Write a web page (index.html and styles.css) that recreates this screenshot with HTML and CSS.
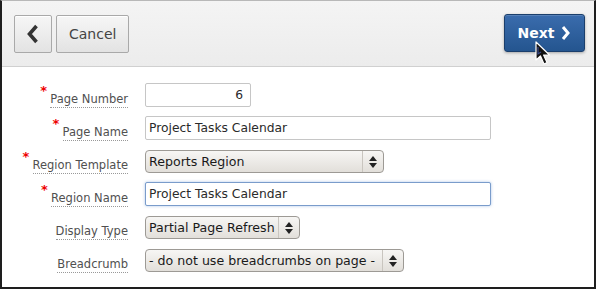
FILE: index.html
```html
<!DOCTYPE html>
<html lang="en">

<head>
    <meta charset="UTF-8">
    <title>Create Page - Attributes</title>
    <link rel="stylesheet" href="styles.css">
</head>

<body>
    <div class="frame">
        <header class="toolbar">
            <div class="toolbar-left">
                <button class="btn btn-icon" title="Previous">
                    <svg width="14" height="20" viewBox="0 0 14 20"><path d="M10.5 2 L3.5 10 L10.5 18" fill="none" stroke="#333" stroke-width="3.6" stroke-linejoin="miter"/></svg>
                </button>
                <button class="btn">Cancel</button>
            </div>
            <button class="btn btn-primary">Next
                <svg width="11" height="16" viewBox="0 0 11 16"><path d="M3 2 L8 8 L3 14" fill="none" stroke="#fff" stroke-width="3"/></svg>
            </button>
            <svg class="cursor" width="20" height="26" viewBox="0 0 20 26"><path d="M1 1 L1 19 L5.5 15 L9 23 L12 21.6 L8.6 14 L14.5 14 Z" fill="#111" stroke="#fff" stroke-width="1.2" stroke-linejoin="round"/><path d="M3 6 L3 13 L6 11" fill="none" stroke="#3a4a8a" stroke-width="1.2"/></svg>
        </header>

        <form class="form">
            <div class="row">
                <label class="label required"><span>Page Number</span></label>
                <input class="field field-num" type="text" value="6">
            </div>
            <div class="row">
                <label class="label required"><span>Page Name</span></label>
                <input class="field field-wide" type="text" value="Project Tasks Calendar">
            </div>
            <div class="row">
                <label class="label required"><span>Region Template</span></label>
                <div class="select select-template">
                    <span class="select-text">Reports Region</span>
                    <span class="select-arrow"></span>
                </div>
            </div>
            <div class="row">
                <label class="label required"><span>Region Name</span></label>
                <input class="field field-wide focused" type="text" value="Project Tasks Calendar">
            </div>
            <div class="row">
                <label class="label"><span>Display Type</span></label>
                <div class="select select-display">
                    <span class="select-text">Partial Page Refresh</span>
                    <span class="select-arrow"></span>
                </div>
            </div>
            <div class="row">
                <label class="label"><span>Breadcrumb</span></label>
                <div class="select select-crumb">
                    <span class="select-text">- do not use breadcrumbs on page -</span>
                    <span class="select-arrow"></span>
                </div>
            </div>
        </form>
    </div>
</body>

</html>
```

FILE: styles.css
```css
body {
    margin: 0;
    font-family: 'DejaVu Sans', sans-serif;
    background: #fff;
}

.frame {
    width: 596px;
    height: 289px;
    box-sizing: border-box;
    border-top: 1px solid #b8b8b8;
    border-left: 2px solid #1e1e1e;
    border-right: 2px solid #1e1e1e;
    border-bottom: 2px solid #1e1e1e;
    overflow: hidden;
}

.toolbar {
    position: relative;
    display: flex;
    justify-content: space-between;
    align-items: flex-start;
    height: 66px;
    box-sizing: border-box;
    padding: 14px 9px 0 12px;
    background: linear-gradient(#f4f4f4, #ececec);
    border-bottom: 1px solid #d0d0d0;
}

.toolbar-left {
    display: flex;
    gap: 4px;
}

.btn {
    display: flex;
    align-items: center;
    justify-content: center;
    height: 38px;
    padding: 0 12px;
    font-family: 'DejaVu Sans', sans-serif;
    font-size: 14px;
    color: #444;
    background: linear-gradient(#f6f6f6, #e3e3e3);
    border: 1px solid #a9a9a9;
    border-radius: 2px;
    box-shadow: inset 0 1px 0 #fff;
}

.btn-icon {
    width: 38px;
    padding: 0;
}

.btn-primary {
    gap: 6px;
    width: 81px;
    margin-top: -1px;
    font-size: 14px;
    font-weight: bold;
    color: #fff;
    background: linear-gradient(#3a6cad, #24558f);
    border: 1px solid #1b3f6c;
    border-radius: 3px;
    box-shadow: 0 1px 3px rgba(0, 0, 0, 0.3), inset 0 1px 0 rgba(255, 255, 255, 0.15);
}

.cursor {
    position: absolute;
    left: 533px;
    top: 40px;
}

.form {
    padding-top: 16px;
    display: flex;
    flex-direction: column;
    gap: 9px;
}

.row {
    display: flex;
    align-items: center;
    height: 24px;
}

.label {
    width: 126px;
    flex-shrink: 0;
    text-align: right;
    font-size: 11.5px;
    color: #505050;
    padding-top: 8px;
    margin-right: 17px;
}

.label span {
    position: relative;
    border-bottom: 1px dotted #999;
    padding-bottom: 1px;
}

.label.required span::before {
    content: "*";
    position: absolute;
    left: -10px;
    top: -9px;
    color: #e00;
    font-size: 13px;
    font-weight: bold;
}

.field {
    height: 24px;
    box-sizing: border-box;
    padding: 0 5px 0 3px;
    font-family: 'DejaVu Sans', sans-serif;
    font-size: 12.3px;
    color: #2a2a2a;
    border: 1px solid #c6c6c6;
    border-radius: 2px;
    background: #fff;
    outline: none;
}

.field-num {
    width: 106px;
    text-align: right;
    padding-right: 7px;
}

.field-wide {
    width: 346px;
}

.field.focused {
    border-color: #7a9ccb;
    box-shadow: 0 0 3px rgba(90, 140, 210, 0.5);
}

.select {
    display: flex;
    align-items: center;
    height: 23px;
    box-sizing: border-box;
    font-size: 12.6px;
    color: #1a1a1a;
    background: linear-gradient(#f7f6f4, #e2dfda);
    border: 1px solid #9d9a95;
    border-radius: 4px;
}

.select-text {
    flex: 1;
    padding-left: 3px;
    white-space: nowrap;
}

.select-arrow {
    position: relative;
    width: 20px;
    height: 100%;
    border-left: 1px solid #c9c5bf;
}

.select-arrow::before,
.select-arrow::after {
    content: "";
    position: absolute;
    left: 6px;
    border-left: 4px solid transparent;
    border-right: 4px solid transparent;
}

.select-arrow::before {
    top: 5px;
    border-bottom: 5px solid #222;
}

.select-arrow::after {
    top: 12px;
    border-top: 5px solid #222;
}

.select-template {
    width: 239px;
}

.select-display {
    width: 155px;
}

.select-crumb {
    width: 259px;
}
```
